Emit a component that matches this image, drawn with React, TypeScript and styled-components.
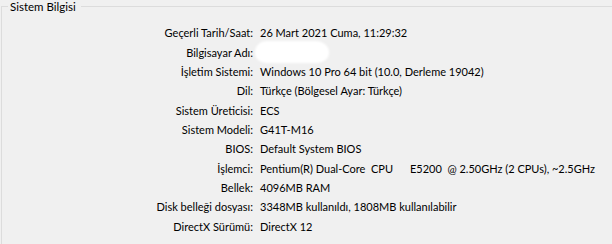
import React from "react";
import styled, { createGlobalStyle } from "styled-components";

const Global = createGlobalStyle`
  html, body {
    margin: 0;
    padding: 0;
    background: #f0f0f0;
    overflow: hidden;
  }
  body {
    font-family: "Lato", "Noto Sans", sans-serif;
    font-size: 11px;
    color: #000;
  }
`;

const Page = styled.div`
  width: 612px;
  height: 244px;
  background: #f0f0f0;
  padding: 0 0 0 1px;
  box-sizing: border-box;
  overflow: hidden;
`;

const Group = styled.fieldset`
  margin: 0;
  padding: 10px 0 0 0;
  border: 1px solid #dcdcdc;
  border-right: none;
  border-bottom: none;
  min-width: 0;
  height: 250px;
  box-sizing: border-box;
`;

const Caption = styled.legend`
  margin-left: 6px;
  padding: 0 5px 0 2px;
  line-height: 13px;
  font-size: 11.5px;
`;

const Table = styled.div`
  display: grid;
  grid-template-columns: 251px 1fr;
  column-gap: 7px;
  grid-auto-rows: 19.35px;
  align-items: center;
  white-space: pre;
`;

const Label = styled.div`
  text-align: right;
`;

const Value = styled.div`
  display: flex;
  align-items: center;
`;

const Redacted = styled.span`
  display: inline-block;
  width: 74px;
  height: 22px;
  margin-left: -5px;
  background: #fff;
  border-radius: 12px 14px 12px 11px / 11px 11px 10px 10px;
  filter: blur(0.8px);
`;

type Row = { label: string; value?: string; hidden?: boolean };

const rows: Row[] = [
  { label: "Geçerli Tarih/Saat:", value: "26 Mart 2021 Cuma, 11:29:32" },
  { label: "Bilgisayar Adı:", hidden: true },
  { label: "İşletim Sistemi:", value: "Windows 10 Pro 64 bit (10.0, Derleme 19042)" },
  { label: "Dil:", value: "Türkçe (Bölgesel Ayar: Türkçe)" },
  { label: "Sistem Üreticisi:", value: "ECS" },
  { label: "Sistem Modeli:", value: "G41T-M16" },
  { label: "BIOS:", value: "Default System BIOS" },
  { label: "İşlemci:", value: "Pentium(R) Dual-Core  CPU      E5200  @ 2.50GHz (2 CPUs), ~2.5GHz" },
  { label: "Bellek:", value: "4096MB RAM" },
  { label: "Disk belleği dosyası:", value: "3348MB kullanıldı, 1808MB kullanılabilir" },
  { label: "DirectX Sürümü:", value: "DirectX 12" },
];

export default function App() {
  return (
    <Page>
      <Global />
      <Group>
        <Caption>Sistem Bilgisi</Caption>
        <Table>
          {rows.map((r) => (
            <React.Fragment key={r.label}>
              <Label>{r.label}</Label>
              <Value>{r.hidden ? <Redacted /> : r.value}</Value>
            </React.Fragment>
          ))}
        </Table>
      </Group>
    </Page>
  );
}
